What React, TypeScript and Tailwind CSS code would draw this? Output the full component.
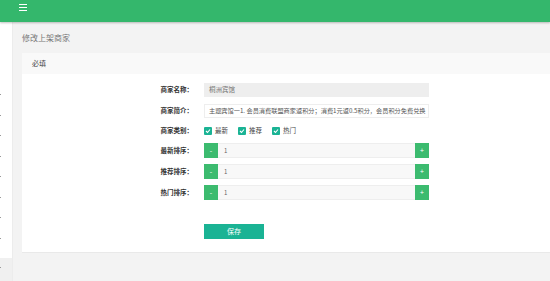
import React from "react";

const font = { fontFamily: '"Noto Sans CJK SC", "Noto Sans", sans-serif' };

function Stepper({ label }: { label: string }) {
  return (
    <div className="flex items-center h-[15px]">
      <div className="w-[171px] shrink-0 text-right text-[6.5px] font-bold text-[#333]">{label}：</div>
      <div className="ml-[11px] flex w-[225px] h-[15px] shrink-0">
        <div className="w-[14px] h-[15px] bg-[#3cbb6f] text-white text-[7px] flex items-center justify-center">-</div>
        <div className="flex-1 h-[15px] bg-[#f8f8f8] border-y border-[#eeeeee] text-[6px] text-[#666] flex items-center pl-[6px]">1</div>
        <div className="w-[14px] h-[15px] bg-[#3cbb6f] text-white text-[7px] flex items-center justify-center">+</div>
      </div>
    </div>
  );
}

function Check({ label }: { label: string }) {
  return (
    <div className="flex items-center mr-[10px]">
      <div className="w-[8px] h-[8px] bg-[#1ab394] rounded-[1px] flex items-center justify-center">
        <svg width="6" height="6" viewBox="0 0 6 6">
          <path d="M1 3 L2.5 4.5 L5 1.5" stroke="white" strokeWidth="1.1" fill="none" />
        </svg>
      </div>
      <span className="ml-[3px] text-[6.5px] text-[#444]">{label}</span>
    </div>
  );
}

export default function App() {
  const dots = [0, 1, 2, 3, 4, 5, 6, 7];
  return (
    <div className="w-[550px] h-[281px] overflow-hidden bg-[#f3f3f3] flex flex-col" style={font}>
      <div className="h-[22px] bg-[#34b76c] shadow-[0_1px_2px_rgba(0,0,0,0.25)] relative z-10 flex items-center pl-[19px] shrink-0">
        <div className="flex flex-col gap-[1.5px] mt-[-7px]">
          <div className="w-[8px] h-[1.5px] bg-white" />
          <div className="w-[8px] h-[1.5px] bg-white" />
          <div className="w-[8px] h-[1.5px] bg-white" />
        </div>
      </div>
      <div className="flex flex-1 min-h-0">
        <div className="w-[13px] shrink-0 flex flex-col border-r border-[#ececec]">
          <div className="bg-white flex flex-col pt-[72px] h-[236px]">
            {dots.map((d) => (
              <div key={d} className="h-[21.5px] flex items-start">
                <div className="w-[1px] h-[1px] bg-[#999]" />
              </div>
            ))}
          </div>
          <div className="flex-1 bg-[#f0f0f0] pt-[9px]">
            <div className="w-[1px] h-[1px] bg-[#999]" />
          </div>
        </div>
        <div className="flex-1 min-w-0 overflow-hidden pl-[9px] flex flex-col">
          <div className="h-[31px] shrink-0 flex items-center text-[8px] text-[#777]">修改上架商家</div>
          <div className="w-[540px] shrink-0 bg-white border-b border-[#e9e9e9]">
            <div className="h-[21px] bg-[#f9f9f9] flex items-center pl-[10px] text-[7px] text-[#444]">必填</div>
            <div className="h-[178px] flex flex-col pt-[9px]">
              <div className="flex items-center h-[14px]">
                <div className="w-[171px] shrink-0 text-right text-[6.5px] font-bold text-[#333]">商家名称：</div>
                <div className="ml-[11px] w-[225px] shrink-0 h-[14px] bg-[#eeeeee] text-[6.5px] text-[#777] flex items-center pl-[5px]">桐洲宾馆</div>
              </div>
              <div className="flex items-center h-[14px] mt-[7px]">
                <div className="w-[171px] shrink-0 text-right text-[6.5px] font-bold text-[#333]">商家简介：</div>
                <div className="ml-[11px] w-[225px] shrink-0 h-[14px] bg-white border border-[#eeeeee] text-[6.2px] text-[#555] flex items-center pl-[4px] overflow-hidden whitespace-nowrap">主题宾馆一1. 会员消费联盟商家返积分；消费1元返0.5积分，会员积分免费兑换</div>
              </div>
              <div className="flex items-center h-[12px] mt-[7px]">
                <div className="w-[171px] shrink-0 text-right text-[6.5px] font-bold text-[#333]">商家类别：</div>
                <div className="ml-[11px] flex items-center">
                  <Check label="最新" />
                  <Check label="推荐" />
                  <Check label="热门" />
                </div>
              </div>
              <div className="mt-[6px] flex flex-col gap-[6px]">
                <Stepper label="最新排序" />
                <Stepper label="推荐排序" />
                <Stepper label="热门排序" />
              </div>
              <div className="mt-[24px] ml-[182px] w-[60px] h-[15px] bg-[#1ab394] text-white text-[7px] flex items-center justify-center">保存</div>
            </div>
          </div>
        </div>
      </div>
    </div>
  );
}
